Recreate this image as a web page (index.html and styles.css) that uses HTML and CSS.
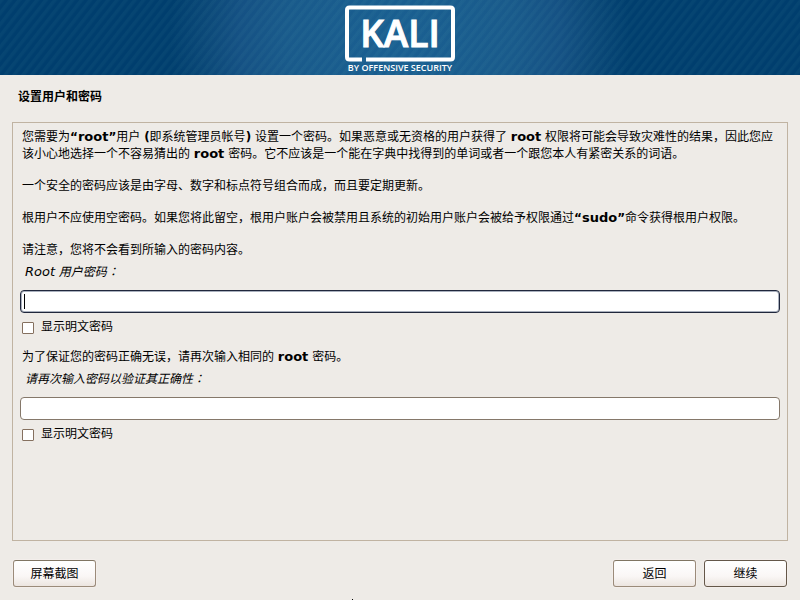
FILE: index.html
```html
<!DOCTYPE html>
<html lang="zh-CN">
<head>
<meta charset="utf-8">
<title>设置用户和密码</title>
<link rel="stylesheet" href="styles.css">
</head>
<body>
<header class="banner">
  <svg class="logo" width="120" height="75" viewBox="0 0 120 75" role="img" aria-label="KALI BY OFFENSIVE SECURITY">
    <path class="frame" d="M22 59.5H9.500Q7 59.500 7 57V10Q7 7.500 9.500 7.500H110.500Q113 7.500 113 10V57Q113 59.500 110.500 59.500H26"/>
    <text class="brand" x="60" y="47">KALI</text>
    <text class="tagline" x="60" y="71">BY OFFENSIVE SECURITY</text>
  </svg>
</header>
<h1 class="title">设置用户和密码</h1>
<main class="panel">
  <p>您需要为<b class="mark">“</b><b>root</b><b class="mark">”</b>用户 <b class="mark">(</b>即系统管理员帐号<b class="mark">)</b> 设置一个密码。如果恶意或无资格的用户获得了 <b>root</b> 权限将可能会导致灾难性的结果，因此您应该小心地选择一个不容易猜出的 <b>root</b> 密码。它不应该是一个能在字典中找得到的单词或者一个跟您本人有紧密关系的词语。</p>
  <p>一个安全的密码应该是由字母、数字和标点符号组合而成，而且要定期更新。</p>
  <p>根用户不应使用空密码。如果您将此留空，根用户账户会被禁用且系统的初始用户账户会被给予权限通过<b class="mark">“</b><b>sudo</b><b class="mark">”</b>命令获得根用户权限。</p>
  <p>请注意，您将不会看到所输入的密码内容。</p>
  <div class="field">
    <label class="caption" for="pw1"><span class="latin">Root</span> 用户密码<span class="colon" lang="ja">：</span></label>
    <div class="entry active"><input type="password" id="pw1"></div>
    <label class="check"><input type="checkbox">显示明文密码</label>
  </div>
  <p>为了保证您的密码正确无误，请再次输入相同的 <b>root</b> 密码。</p>
  <div class="field">
    <label class="caption" for="pw2">请再次输入密码以验证其正确性<span class="colon" lang="ja">：</span></label>
    <div class="entry"><input type="password" id="pw2"></div>
    <label class="check"><input type="checkbox">显示明文密码</label>
  </div>
</main>
<footer class="actions">
  <button type="button">屏幕截图</button>
  <button type="button" class="back">返回</button>
  <button type="button" class="default">继续</button>
</footer>
</body>
</html>
```
FILE: styles.css
```css
* { box-sizing: border-box; }
body {
  margin: 0;
  min-height: 100vh;
  display: flex;
  flex-direction: column;
  background: #eeebe7;
  color: #000;
  font: 12px/17px "DejaVu Sans", "Noto Sans CJK SC", sans-serif;
  position: relative;
}
body::after {
  content: "";
  position: absolute;
  left: 44%;
  bottom: 0;
  width: 1px;
  height: 1px;
  background: #000;
}
.banner {
  height: 75px;
  display: flex;
  justify-content: center;
  background:
    repeating-linear-gradient(128deg, rgba(120,200,190,0.05) 0, rgba(120,200,190,0.05) 2px, transparent 4px, transparent 6px, rgba(120,200,190,0.05) 7px),
    radial-gradient(ellipse 230px 220px at center, #1a6092 0, #195a8b 50%, #155184 70%, #0b4878 85%, #003e6e 100%);
}
.logo { display: block; }
.frame { fill: none; stroke: #fff; stroke-width: 4; }
.brand {
  fill: #fff;
  stroke: #fff;
  stroke-width: 1;
  font: 600 37px "Open Sans", sans-serif;
  text-anchor: middle;
}
.tagline { fill: #fff; font: 600 9px "Open Sans", sans-serif; text-anchor: middle; }
.title { margin: 14px 18px 16px; font-size: 12px; line-height: 17px; font-weight: bold; }
.panel {
  flex: 1;
  margin: 0 12px;
  padding: 6px 7px;
  border: 1px solid #c0b3a2;
}
p { margin: 0 2px 15px; }
p:has(+ .field) { margin-bottom: 5px; }
b, .latin { font-size: 13px; line-height: 1; }
.mark { font-size: 12px; }
.field { margin-bottom: 13px; }
.caption { display: block; margin: 0 5px 9px; font-style: italic; }
.colon { font-family: "Noto Sans CJK JP", sans-serif; line-height: 1; }
.entry { position: relative; margin-bottom: 6px; }
.entry input {
  display: block;
  width: 100%;
  height: 23px;
  padding: 2px 4px;
  border: 1px solid #85786a;
  border-radius: 4px;
  background: #fff;
  font: inherit;
  outline: none;
}
.active input { border-color: #20273c; box-shadow: inset 0 0 0 1px #a9b0bd; }
.active::after {
  content: "";
  position: absolute;
  left: 4px;
  top: 4px;
  width: 1px;
  height: 15px;
  background: #000;
}
.check { display: flex; align-items: center; gap: 7px; margin-left: 2px; }
.check input {
  appearance: none;
  width: 12px;
  height: 12px;
  margin: 0;
  border: 1px solid #85705f;
  border-radius: 1px;
  background: #fff;
}
.actions { display: flex; gap: 8px; padding: 19px 13px 13px; }
button {
  width: 83px;
  height: 27px;
  padding: 2px 0 0;
  border: 1px solid #9b8b7a;
  border-top-color: #807563;
  border-radius: 3px;
  background: linear-gradient(#fff, #faf7f6 60%, #ece5e0);
  box-shadow: 0 0 0 1px #f3eeeb;
  color: #000;
  font: 12px/17px "DejaVu Sans", "Noto Sans CJK SC", sans-serif;
}
.back { margin-left: auto; }
.default { border-color: #645749; }
```
